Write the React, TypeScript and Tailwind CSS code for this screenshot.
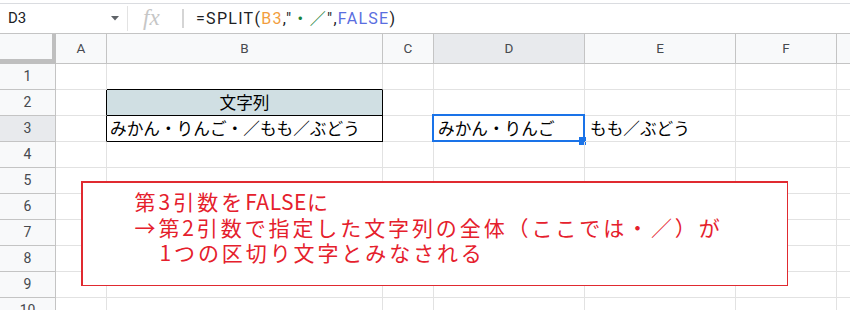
import React from "react";

const cols = [
  { key: "A", w: 51 },
  { key: "B", w: 276 },
  { key: "C", w: 51 },
  { key: "D", w: 151 },
  { key: "E", w: 151 },
  { key: "F", w: 101 },
  { key: "G", w: 100 },
];

const JP = "font-['Noto_Sans_CJK_JP',sans-serif]";

function FormulaBar() {
  return (
    <div className="h-[33px] pt-[3px]">
      <div className="h-[30px] border-t border-[#dadce0] flex items-center">
        <div className="w-[127px] flex items-center justify-between pl-[8px] pr-[8px]">
          <span className="text-[15px] text-[#202124] font-['Roboto',sans-serif]">D3</span>
          <svg width="8" height="5" viewBox="0 0 8 5">
            <path d="M0 0 L8 0 L4 4.5 Z" fill="#5f6368" />
          </svg>
        </div>
        <div className="w-px h-[25px] bg-[#e3e3e3]" />
        <div className="w-[54px] flex items-center pl-[15px]">
          <span className="italic text-[23px] leading-none text-[#c6c6c6] font-['Liberation_Serif',serif] -mt-[2px]">
            fx
          </span>
        </div>
        <div className="w-[2px] h-[19px] bg-[#d5d5d5]" />
        <div className="pl-[12px] text-[16px] text-[#202124] font-['Roboto','Noto_Sans_CJK_JP',sans-serif] tracking-[1.3px]">
          <span>=SPLIT(</span>
          <span className="text-[#f29d3d]">B3</span>
          <span>,"</span>
          <span className="text-[#188038]">・／</span>
          <span>",</span>
          <span className="text-[#5a6ee0]">FALSE</span>
          <span>)</span>
        </div>
      </div>
    </div>
  );
}

function HeaderRow() {
  return (
    <div className="flex border-t border-[#c4c4c4] h-[31px] font-['Roboto',sans-serif] text-[13.5px] text-[#474a4f]">
      <div className="w-[56px] shrink-0 bg-[#f8f9fa] border-r-[4px] border-b-[5px] border-[#bfbfbf]" />
      {cols.map((c) => (
        <div
          key={c.key}
          style={{ width: c.w }}
          className={`shrink-0 border-r border-b border-[#c4c4c4] flex items-center justify-center ${
            c.key === "D" ? "bg-[#e8eaed]" : "bg-[#f8f9fa]"
          }`}
        >
          {c.key === "G" ? "" : c.key}
        </div>
      ))}
    </div>
  );
}

type CellSpec = {
  text?: string;
  bg?: string;
  center?: boolean;
  rBlack?: boolean;
  bBlack?: boolean;
  selected?: boolean;
  pl?: string;
};

function Row({ n, cells }: { n: number; cells: Record<string, CellSpec> }) {
  return (
    <div className="flex h-[26px]">
      <div
        className={`w-[56px] shrink-0 border-r border-b border-[#c4c4c4] flex items-center justify-center font-['Roboto',sans-serif] text-[14px] text-[#474a4f] ${
          n === 3 ? "bg-[#e8eaed]" : "bg-[#f8f9fa]"
        }`}
      >
        {n}
      </div>
      {cols.map((c) => {
        const s = cells[c.key] || {};
        return (
          <div
            key={c.key}
            style={{ width: c.w }}
            className={`relative shrink-0 border-r border-b ${s.rBlack ? "border-r-black" : "border-r-[#e2e2e2]"} ${
              s.bBlack ? "border-b-black" : "border-b-[#e2e2e2]"
            } ${s.bg ?? ""} flex items-center ${s.center ? "justify-center" : s.pl ?? "pl-[3px]"} ${JP} text-[16.67px] text-black whitespace-nowrap`}
          >
            {s.text && <span className="leading-none">{s.text}</span>}
            {s.selected && (
              <>
                <div className="absolute -left-[2px] -top-[2px] -right-[1px] -bottom-[1px] border-2 border-[#1a73e8]" />
                <div className="absolute left-[145px] top-[21px] w-[7px] h-[8px] bg-[#1a73e8]" />
              </>
            )}
          </div>
        );
      })}
    </div>
  );
}

export default function App() {
  const rows: Record<number, Record<string, CellSpec>> = {
    1: { B: { bBlack: true } },
    2: {
      A: { rBlack: true },
      B: { text: "文字列", bg: "bg-[#d0dfe3]", center: true, rBlack: true, bBlack: true },
    },
    3: {
      A: { rBlack: true },
      B: { text: "みかん・りんご・／もも／ぶどう", rBlack: true, bBlack: true },
      D: { text: "みかん・りんご", selected: true, pl: "pl-[4px]" },
      E: { text: "もも／ぶどう", pl: "pl-[5px]" },
    },
  };
  return (
    <div className="relative w-[850px] h-[310px] overflow-hidden bg-white">
      <FormulaBar />
      <HeaderRow />
      {Array.from({ length: 10 }, (_, i) => i + 1).map((n) => (
        <Row key={n} n={n} cells={rows[n] || {}} />
      ))}
      <div className="absolute left-[81px] top-[181px] w-[707px] h-[105px] bg-[#e02a30] p-[1.5px]">
        <div
          className={`w-full h-full bg-white ${JP} text-[21px] leading-[25.5px] text-[#e5202c] pt-[6.5px]`}
        >
          <div className="pl-[52px] tracking-[3px]">
            第3引数を<span className="tracking-[0.5px]">FALSE</span>に
          </div>
          <div className="pl-[52px] tracking-[2.9px]">→第2引数で指定した文字列の全体（ここでは・／）が</div>
          <div className="pl-[77px] tracking-[2.9px]">1つの区切り文字とみなされる</div>
        </div>
      </div>
    </div>
  );
}
